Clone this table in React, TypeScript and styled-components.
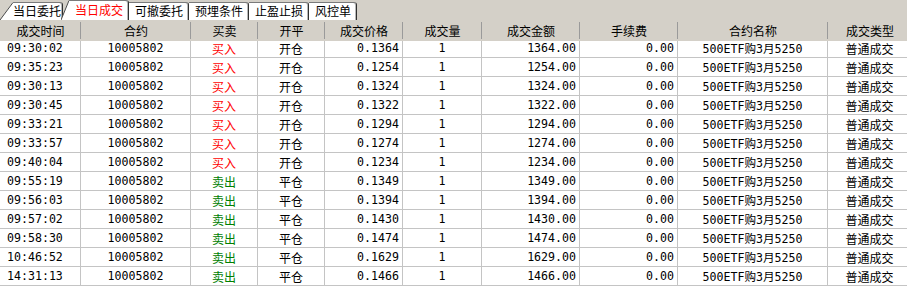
import React from "react";
import styled, { createGlobalStyle } from "styled-components";

const GlobalStyle = createGlobalStyle`
  html, body { margin: 0; padding: 0; background: #ffffff; }
  body { font-family: "DejaVu Sans Mono", "Noto Sans CJK SC", monospace; }
`;

const Panel = styled.div`
  width: 907px;
  height: 289px;
  overflow: hidden;
  background: #ffffff;
  display: flex;
  flex-direction: column;
`;

const TabBar = styled.div`
  display: flex;
  align-items: flex-end;
  height: 20px;
  background: #d4d0c8;
  flex-shrink: 0;
`;

const TabItem = styled.div<{ $active?: boolean; $overlap?: boolean }>`
  display: flex;
  align-items: stretch;
  height: ${(p) => (p.$active ? 20 : 18)}px;
  margin-left: ${(p) => (p.$overlap ? "-2px" : "0")};
  position: relative;
  z-index: ${(p) => (p.$active ? 2 : 1)};
`;

const TabLabel = styled.span<{ $active?: boolean; $pl: number; $pr: number }>`
  display: flex;
  align-items: center;
  background: #ffffff;
  border-top: 1px solid #7a7a7a;
  border-right: 1px solid #303030;
  border-top-right-radius: 3px;
  box-shadow: inset -1px 0 0 #b8b8b8;
  padding: 0 ${(p) => p.$pr}px 1px ${(p) => p.$pl}px;
  color: ${(p) => (p.$active ? "#ff0000" : "#000000")};
  font-family: "Noto Sans CJK SC", sans-serif;
  font-size: 12px;
  line-height: 14px;
  white-space: nowrap;
`;

const Slant: React.FC<{ w: number; h: number }> = ({ w, h }) => (
  <svg width={w} height={h} viewBox={`0 0 ${w} ${h}`} style={{ display: "block", flexShrink: 0 }}>
    <polygon points={`0,${h} ${w},0 ${w},${h}`} fill="#ffffff" />
    <line x1={0} y1={h} x2={w} y2={0.5} stroke="#4a4a4a" strokeWidth={1} />
  </svg>
);

const COLS = [81, 110, 67, 67, 78, 79, 98, 98, 150, 84];

const Grid = styled.div`
  display: grid;
  grid-template-columns: ${COLS.map((c) => c + "px").join(" ")};
  grid-auto-rows: 19px;
  width: ${COLS.reduce((a, b) => a + b, 0)}px;
`;

const HeaderCell = styled.div`
  grid-row: 1;
  height: 21px;
  background: #d4d0c8;
  display: flex;
  align-items: center;
  justify-content: center;
  font-family: "Noto Sans CJK SC", sans-serif;
  font-size: 12px;
  color: #000000;
  position: relative;
  white-space: nowrap;
  &::after {
    content: "";
    position: absolute;
    right: 0;
    top: 2px;
    bottom: 2px;
    width: 1px;
    background: #9a9a9a;
    box-shadow: 1px 0 0 #ffffff;
  }
`;

const HeaderRow = styled.div`
  display: contents;
`;

type Align = "left" | "center" | "right";

const Cell = styled.div<{ $align: Align; $color?: string }>`
  height: 19px;
  box-sizing: border-box;
  border-right: 1px solid #c4c4c4;
  border-bottom: 1px solid #c4c4c4;
  display: flex;
  align-items: center;
  justify-content: ${(p) =>
    p.$align === "left" ? "flex-start" : p.$align === "right" ? "flex-end" : "center"};
  padding: ${(p) => (p.$align === "left" ? "0 0 0 7px" : p.$align === "right" ? "0 3px 0 0" : "0")};
  font-family: "DejaVu Sans Mono", "Noto Sans CJK SC", monospace;
  font-size: 11.6px;
  color: ${(p) => p.$color || "#000000"};
  white-space: nowrap;
  overflow: hidden;
`;

const CnText = styled.span`
  font-family: "Noto Sans CJK SC", sans-serif;
  font-size: 12px;
`;

const tabs = [
  { label: "当日委托" },
  { label: "当日成交", active: true },
  { label: "可撤委托" },
  { label: "预埋条件" },
  { label: "止盈止损" },
  { label: "风控单" },
];

const headers = [
  "成交时间",
  "合约",
  "买卖",
  "开平",
  "成交价格",
  "成交量",
  "成交金额",
  "手续费",
  "合约名称",
  "成交类型",
];

const trades: [string, boolean, string][] = [
  ["09:30:02", true, "0.1364"],
  ["09:35:23", true, "0.1254"],
  ["09:30:13", true, "0.1324"],
  ["09:30:45", true, "0.1322"],
  ["09:33:21", true, "0.1294"],
  ["09:33:57", true, "0.1274"],
  ["09:40:04", true, "0.1234"],
  ["09:55:19", false, "0.1349"],
  ["09:56:03", false, "0.1394"],
  ["09:57:02", false, "0.1430"],
  ["09:58:30", false, "0.1474"],
  ["10:46:52", false, "0.1629"],
  ["14:31:13", false, "0.1466"],
];

export default function App() {
  return (
    <>
      <GlobalStyle />
      <Panel>
        <TabBar>
          {tabs.map((t, i) => {
            if (i === 0) {
              return (
                <TabItem key={t.label}>
                  <Slant w={13} h={18} />
                  <TabLabel $pl={0} $pr={1}>{t.label}</TabLabel>
                </TabItem>
              );
            }
            if (t.active) {
              return (
                <TabItem key={t.label} $active $overlap>
                  <Slant w={8} h={20} />
                  <TabLabel $active $pl={6} $pr={5}>{t.label}</TabLabel>
                </TabItem>
              );
            }
            return (
              <TabItem key={t.label}>
                <TabLabel $pl={6} $pr={5}>{t.label}</TabLabel>
              </TabItem>
            );
          })}
        </TabBar>
        <Grid>
          <HeaderRow>
            {headers.map((h) => (
              <HeaderCell key={h}>{h}</HeaderCell>
            ))}
          </HeaderRow>
          {trades.map(([time, buy, price], i) => {
            const amount = (parseFloat(price) * 10000).toFixed(2);
            return (
              <React.Fragment key={i}>
                <Cell $align="left">{time}</Cell>
                <Cell $align="center">10005802</Cell>
                <Cell $align="center" $color={buy ? "#ff0000" : "#008000"}>
                  <CnText>{buy ? "买入" : "卖出"}</CnText>
                </Cell>
                <Cell $align="center">
                  <CnText>{buy ? "开仓" : "平仓"}</CnText>
                </Cell>
                <Cell $align="right">{price}</Cell>
                <Cell $align="center">1</Cell>
                <Cell $align="right">{amount}</Cell>
                <Cell $align="right">0.00</Cell>
                <Cell $align="center">500ETF购3月5250</Cell>
                <Cell $align="center">
                  <CnText>普通成交</CnText>
                </Cell>
              </React.Fragment>
            );
          })}
        </Grid>
      </Panel>
    </>
  );
}
